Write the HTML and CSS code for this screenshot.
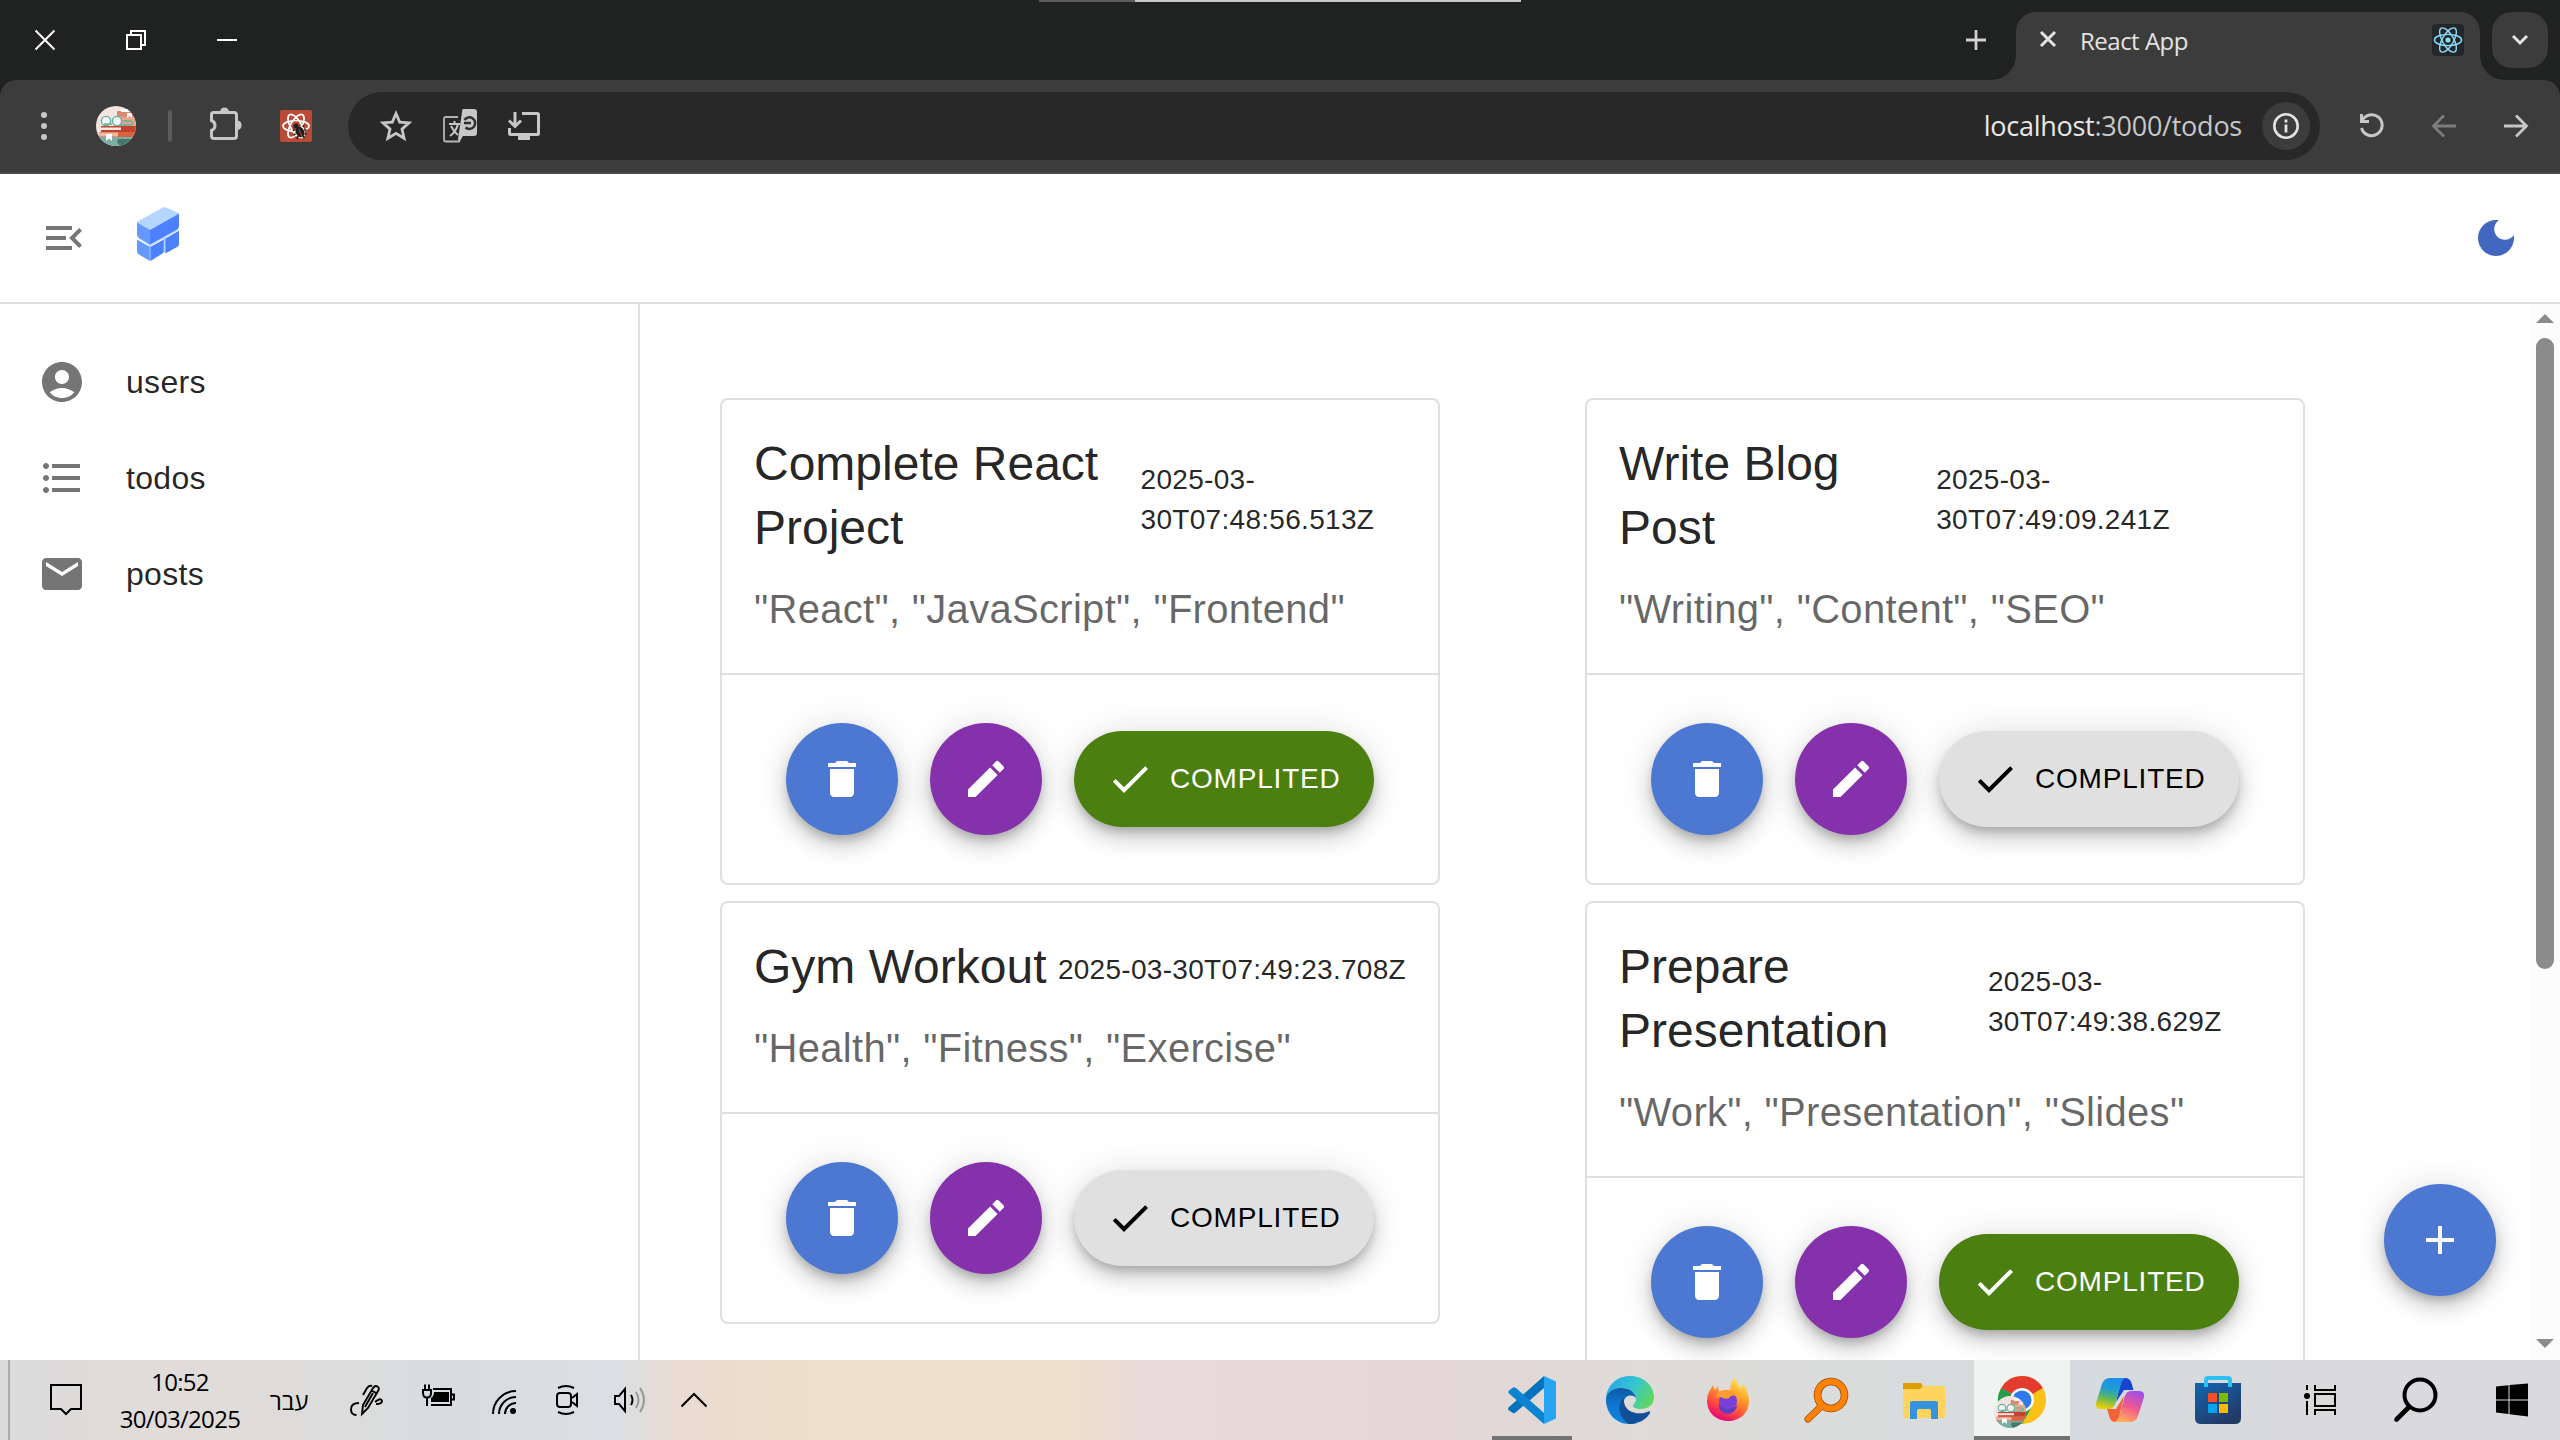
FILE: index.html
```html
<!DOCTYPE html>
<html lang="en">
<head>
<meta charset="utf-8">
<title>React App</title>
<link rel="stylesheet" href="styles.css">
</head>
<body>
<svg class="sprite" width="0" height="0" aria-hidden="true">
  <defs>
    <clipPath id="round"><circle cx="20" cy="20" r="20"/></clipPath>
    <symbol id="avatar" viewBox="0 0 40 40">
      <g clip-path="url(#round)">
        <rect width="40" height="40" fill="#f3e4df"/>
        <rect x="21" y="5" width="19" height="6" fill="#d98a72"/>
        <rect x="25" y="3" width="12" height="3" fill="#fff"/>
        <rect x="22" y="11" width="18" height="9" fill="#e3a58e"/>
        <path d="M31 7h5v5l-2.500-2-2.500 2z" fill="#fff"/>
        <rect x="5" y="20" width="35" height="6" fill="#c5412f"/>
        <rect x="5" y="21.500" width="20" height="2.500" fill="#f6e9e4"/>
        <rect x="3" y="26" width="37" height="6" fill="#d9623f"/>
        <rect x="3" y="26.500" width="19" height="4" fill="#efb79f"/>
        <rect x="0" y="31" width="40" height="9" fill="#78b0a3"/>
        <path d="M22 33h18v7H24q-4-4-2-7z" fill="#47776b"/>
        <path d="M10 28h6v7l-3-2.500-3 2.500z" fill="#fff"/>
        <g fill="#f2f6f4" stroke="#63b09f" stroke-width="1.400"><circle cx="10" cy="15" r="4.600"/><circle cx="21" cy="15" r="4.600"/><path d="M8 18h8M27 15h8q3 2 0 4H24" fill="none"/></g>
      </g>
    </symbol>
    <symbol id="atom" viewBox="-20 -20 40 40">
      <g fill="none" stroke="currentColor"><ellipse rx="17" ry="7"/><ellipse rx="17" ry="7" transform="rotate(60)"/><ellipse rx="17" ry="7" transform="rotate(120)"/></g>
      <circle r="3.200" fill="currentColor" stroke="none"/>
    </symbol>
    <symbol id="trash" viewBox="0 0 24 24"><path d="M6 19c0 1.100.9 2 2 2h8c1.100 0 2-.9 2-2V7H6v12zM19 4h-3.500l-1-1h-5l-1 1H5v2h14V4z"/></symbol>
    <symbol id="pencil" viewBox="0 0 24 24"><path d="M3 17.250V21h3.750L17.810 9.940l-3.750-3.750L3 17.250zM20.710 7.040c.39-.39.39-1.020 0-1.410l-2.340-2.340a.9959.9959 0 0 0-1.410 0l-1.830 1.830 3.750 3.750 1.830-1.830z"/></symbol>
    <symbol id="check" viewBox="0 0 24 24"><path d="M9 16.170 4.830 12l-1.420 1.410L9 19 21 7l-1.410-1.410z"/></symbol>
  </defs>
</svg>

<div class="screen">
  <header class="tabstrip">
    <div class="load-line"><span class="load-dim"></span><span class="load-lit"></span></div>
    <div class="window-controls">
      <svg width="24" height="24" viewBox="0 0 24 24"><path d="M2.500 2.500l19 19M21.500 2.500l-19 19" stroke="#fff" stroke-width="2" fill="none"/></svg>
      <svg width="24" height="24" viewBox="0 0 24 24"><path d="M3 7h14v14H3zM7 7V3h14v14h-4" stroke="#fff" stroke-width="2" fill="none"/></svg>
      <svg width="24" height="24" viewBox="0 0 24 24"><path d="M2 12h20" stroke="#fff" stroke-width="2"/></svg>
    </div>
    <svg class="new-tab" width="20" height="20" viewBox="0 0 20 20"><path d="M10 0v20M0 10h20" stroke="#d0d0d0" stroke-width="2.800"/></svg>
    <div class="tab">
      <svg class="tab-close" width="16" height="16" viewBox="0 0 16 16"><path d="M1 1l14 14M15 1L1 15" stroke="#e3e3e3" stroke-width="3"/></svg>
      <span class="tab-title">React App</span>
      <span class="favicon"><svg width="32" height="32"><use href="#atom"/></svg></span>
    </div>
    <div class="tab-search"><svg width="16" height="10" viewBox="0 0 16 10"><path d="M1 1l7 7 7-7" stroke="#e3e3e3" stroke-width="3" fill="none"/></svg></div>
  </header>

  <div class="toolbar">
    <svg class="ic-dots" width="40" height="40" viewBox="0 0 40 40" fill="#c7c7c7"><circle cx="20" cy="9" r="3"/><circle cx="20" cy="20" r="3"/><circle cx="20" cy="31" r="3"/></svg>
    <svg class="ic-avatar" width="40" height="40"><use href="#avatar"/></svg>
    <span class="divider"></span>
    <svg class="ic-puzzle" width="40" height="40" viewBox="0 -1 40 40"><path d="M7.500 5.500h20.500q2.500 0 2.500 2.500v21q0 2.500-2.500 2.500H8q-2.500 0-2.500-2.500v-5.500a6 5.500 0 0 0 0-10V7.500q0-2 2-2z" fill="none" stroke="#c7c7c7" stroke-width="3"/><path d="M14 5a4.500 4.500 0 0 1 9 0zM31.500 13.500a4.800 4.800 0 0 1 0 9.500z" fill="#c7c7c7"/></svg>
    <svg class="ic-react" width="40" height="40" viewBox="0 0 40 40"><rect x="4" y="4" width="32" height="32" rx="2" fill="#b94b36"/><g fill="none" stroke="#fff" stroke-width="1.700"><ellipse cx="20" cy="20" rx="13" ry="5.500"/><ellipse cx="20" cy="20" rx="13" ry="5.500" transform="rotate(60 20 20)"/><ellipse cx="20" cy="20" rx="13" ry="5.500" transform="rotate(120 20 20)"/></g><g fill="#202020"><circle cx="20" cy="20" r="2.600"/><ellipse cx="24" cy="26" rx="4.200" ry="5.500" transform="rotate(-25 24 26)"/><path d="M18.500 25l-1.500-1.500M19.500 28l-2 1M22 30l-1 3M27 21l1-2M28 24h2.500M28.500 27.500l2 .5M27 30l1.500 2" stroke="#202020" stroke-width="1.600"/></g><path d="M23 23l3 8" stroke="#b94b36"/></svg>
    <div class="omnibox">
      <svg width="40" height="40" viewBox="0 0 40 40"><path d="M20 7.500l3.700 8.600 9.300.8-7 6.200 2.100 9.200L20 27.400l-8.100 4.900L14 23.100l-7-6.200 9.300-.8z" fill="none" stroke="#c7c7c7" stroke-width="2.800"/></svg>
      <svg width="40" height="40" viewBox="0 0 40 40"><path d="M18 11H6q-2 0-2 2v20.500q0 2 2 2h13L22 29" fill="none" stroke="#b4b4b4" stroke-width="1.800"/><path d="M22.500 3H34q3 0 3 3v21q0 3-3 3H23l-4 5 -1-2z" fill="#c7c7c7"/><path d="M9 18h11M14.500 15v3M18 18q-2 8-8 12M11 20q3 6 7 9" stroke="#c7c7c7" stroke-width="2" fill="none"/><path d="M24 17h7M24.500 14a5.800 5.800 0 1 1 1 7.500" stroke="#303030" stroke-width="2.500" fill="none"/></svg>
      <svg width="40" height="40" viewBox="0 0 40 40"><path d="M18 7.500h15.500q1 0 1 1v19q0 1-1 1h-27q-1 0-1-1V22M11 6v14M5 14.500l6 6 6-6" fill="none" stroke="#c7c7c7" stroke-width="3"/><rect x="14" y="28" width="12" height="6" fill="#c7c7c7"/></svg>
      <span class="url"><b>localhost</b>:3000/todos</span>
      <span class="site-info"><svg width="28" height="28" viewBox="0 0 28 28"><circle cx="14" cy="14" r="11.700" fill="none" stroke="#e3e3e3" stroke-width="2.600"/><path d="M14 12.500v8M14 7.500v3" stroke="#e3e3e3" stroke-width="2.800"/></svg></span>
    </div>
    <div class="nav">
      <svg width="40" height="40" viewBox="0 0 40 40"><path d="M9.500 8v7.500H17M10 15A10.500 10.500 0 1 1 9.500 22" fill="none" stroke="#c7c7c7" stroke-width="3"/></svg>
      <svg width="40" height="40" viewBox="0 0 40 40"><path d="M32 20H10M20 9.500L9.500 20 20 30.500" fill="none" stroke="#7c7c7c" stroke-width="2.800"/></svg>
      <svg width="40" height="40" viewBox="0 0 40 40"><path d="M8 20h22M20 9.500L30.500 20 20 30.500" fill="none" stroke="#c7c7c7" stroke-width="2.800"/></svg>
    </div>
  </div>

  <div class="appbar">
    <svg class="menu-open" width="48" height="48" viewBox="0 0 24 24" fill="#757575"><path d="M3 18h13v-2H3v2zm0-5h10v-2H3v2zm0-7v2h13V6H3zm18 9.590L17.420 12 21 8.410 19.590 7l-5 5 5 5L21 15.590z"/></svg>
    <svg class="logo" width="44" height="56" viewBox="136 206 44 56"><path d="M138 238l12 8 28-15.500-1-2.500-27 14-12-7z" fill="#b5d7ff"/><path d="M149.500 244h1.500v16.500h-1.500zM163 238h2.500v14.500h-2.500z" fill="#b5d7ff"/><path d="M138.500 221l24-13.300q2-1.200 4 0l11.500 5q2 1 0 2.300l-28 15.500-12-7q-2.500-1.200.5-2.500z" fill="#b5d7ff"/><path d="M137 222.500l13 7.500v14.400l-11-6.500q-2-1.200-2-3.200z" fill="#69f"/><path d="M150 230l29-16.300v12.800q0 2-2 3.100L150 244.600z" fill="#4d80ff"/><path d="M137 239.500l12.800 7.300V261l-10.800-6.500q-2-1.200-2-3.200z" fill="#69f"/><path d="M150.500 246.800l13.200-7.400v12q0 1.500-2 2.600L150.500 261z" fill="#4d80ff"/><path d="M165.300 238.500l13.700-7.700v13.700q0 1.500-2 2.600l-11.700 6.500z" fill="#4d80ff"/></svg>
    <svg class="theme" width="48" height="48" viewBox="0 0 24 24" fill="#4267be"><path d="M12 3c-4.970 0-9 4.030-9 9s4.030 9 9 9 9-4.030 9-9c0-.46-.04-.92-.1-1.360-.98 1.370-2.580 2.260-4.400 2.260-2.980 0-5.400-2.420-5.400-5.400 0-1.810.89-3.420 2.260-4.400-.44-.06-.9-.1-1.360-.1z"/></svg>
  </div>

  <div class="body">
    <nav class="sidebar">
      <a class="side-item"><svg viewBox="0 0 24 24"><path d="M12 2C6.480 2 2 6.480 2 12s4.480 10 10 10 10-4.480 10-10S17.520 2 12 2zm0 4c1.930 0 3.500 1.570 3.500 3.500S13.930 13 12 13s-3.500-1.570-3.500-3.500S10.070 6 12 6zm0 14c-2.030 0-4.430-.82-6.140-2.880C7.550 15.800 9.680 15 12 15s4.450.8 6.140 2.120C16.430 19.180 14.030 20 12 20z"/></svg>users</a>
      <a class="side-item"><svg viewBox="0 0 24 24"><path d="M4 10.500c-.83 0-1.500.67-1.500 1.500s.67 1.500 1.500 1.500 1.500-.67 1.500-1.500-.67-1.500-1.500-1.500zm0-6c-.83 0-1.500.67-1.500 1.500S3.170 7.500 4 7.500 5.500 6.830 5.500 6 4.830 4.500 4 4.500zm0 12c-.83 0-1.500.68-1.500 1.500s.68 1.500 1.500 1.500 1.500-.68 1.500-1.500-.67-1.500-1.500-1.500zM7 19h14v-2H7v2zm0-6h14v-2H7v2zm0-8v2h14V5H7z"/></svg>todos</a>
      <a class="side-item"><svg viewBox="0 0 24 24"><path d="M20 4H4c-1.100 0-1.990.9-1.990 2L2 18c0 1.100.9 2 2 2h16c1.100 0 2-.9 2-2V6c0-1.100-.9-2-2-2zm0 4-8 5-8-5V6l8 5 8-5v2z"/></svg>posts</a>
    </nav>

    <main class="content">
      <div class="grid">
        <div class="column">
          <article class="card">
            <div class="card-text">
              <div class="card-head"><h2>Complete React Project</h2><p>2025-03-30T07:48:56.513Z</p></div>
              <p class="tags">"React", "JavaScript", "Frontend"</p>
            </div>
            <div class="actions">
              <button class="fab blue"><svg><use href="#trash"/></svg></button>
              <button class="fab purple"><svg><use href="#pencil"/></svg></button>
              <button class="fab wide done"><svg><use href="#check"/></svg>COMPLITED</button>
            </div>
          </article>
          <article class="card">
            <div class="card-text">
              <div class="card-head"><h2>Gym Workout</h2><p>2025-03-30T07:49:23.708Z</p></div>
              <p class="tags">"Health", "Fitness", "Exercise"</p>
            </div>
            <div class="actions">
              <button class="fab blue"><svg><use href="#trash"/></svg></button>
              <button class="fab purple"><svg><use href="#pencil"/></svg></button>
              <button class="fab wide"><svg><use href="#check"/></svg>COMPLITED</button>
            </div>
          </article>
        </div>
        <div class="column">
          <article class="card">
            <div class="card-text">
              <div class="card-head"><h2>Write Blog Post</h2><p>2025-03-30T07:49:09.241Z</p></div>
              <p class="tags">"Writing", "Content", "SEO"</p>
            </div>
            <div class="actions">
              <button class="fab blue"><svg><use href="#trash"/></svg></button>
              <button class="fab purple"><svg><use href="#pencil"/></svg></button>
              <button class="fab wide"><svg><use href="#check"/></svg>COMPLITED</button>
            </div>
          </article>
          <article class="card">
            <div class="card-text">
              <div class="card-head"><h2>Prepare Presentation</h2><p>2025-03-30T07:49:38.629Z</p></div>
              <p class="tags">"Work", "Presentation", "Slides"</p>
            </div>
            <div class="actions">
              <button class="fab blue"><svg><use href="#trash"/></svg></button>
              <button class="fab purple"><svg><use href="#pencil"/></svg></button>
              <button class="fab wide done"><svg><use href="#check"/></svg>COMPLITED</button>
            </div>
          </article>
        </div>
      </div>
      <button class="fab blue add"><svg viewBox="0 0 24 24"><path d="M19 13h-6v6h-2v-6H5v-2h6V5h2v6h6v2z"/></svg></button>
    </main>

    <div class="scrollbar"><span class="arrow up"></span><span class="thumb"></span><span class="arrow down"></span></div>
  </div>

  <footer class="taskbar">
    <span class="peek"></span>
    <svg class="t-note" width="48" height="48" viewBox="0 0 48 48"><path d="M9 9h30v24H29l-5 5-5-5H9z" fill="none" stroke="#000" stroke-width="2"/></svg>
    <div class="clock"><span>10:52</span><span>30/03/2025</span></div>
    <span class="lang" lang="he">עבר</span>
    <div class="tray">
      <svg class="t-pen" width="48" height="48" viewBox="0 0 48 48"><path d="M20 38l1-9 10-17q2-3 4.500-1.500T36 15L26 32l-6 6zM29 14l5 3M30 10q-3-1-5 2l-4 7M31 17l-8 14M17 27q-8 0-8 6.500 0 5.500 5.500 5.500M33 26q6-5 7-1 0 3-6 3" fill="none" stroke="#000" stroke-width="1.900"/></svg>
      <svg class="t-bat" width="48" height="48" viewBox="0 -2 48 48"><path d="M19 11h18v16H17M38 16.500h2v5h-2" fill="none" stroke="#000" stroke-width="2"/><path d="M20 14h15v10H17v-4q3-2 3-6zM12 20h2v8h-2z"/><path d="M9 12h8v3q0 4.500-4 4.500t-4-4.500zM11 12V6.500M15 12V6.500" fill="none" stroke="#000" stroke-width="2"/></svg>
      <svg class="t-wifi" width="48" height="48" viewBox="0 0 48 48"><path d="M13 38A23 23 0 0 1 36 15M19 38A17 17 0 0 1 36 21M25 38A11 11 0 0 1 36 27" fill="none" stroke="#000" stroke-width="2"/><circle cx="33" cy="35" r="3"/></svg>
      <svg class="t-meet" width="48" height="48" viewBox="0 0 48 48"><rect x="14" y="17" width="14" height="14" rx="3" fill="none" stroke="#000" stroke-width="2"/><path d="M29 22l5-4v12l-5-4M15 12q8-4 16 0M15 36q8 4 16 0" fill="none" stroke="#000" stroke-width="2"/></svg>
      <svg class="t-vol" width="48" height="48" viewBox="0 0 48 48"><path d="M9 20h4l6-7v22l-6-7H9z" fill="none" stroke="#000" stroke-width="2"/><path d="M25 19q3 5 0 10" fill="none" stroke="#000" stroke-width="2"/><path d="M30 16q5 8 0 16M34 12q8 12 0 24" fill="none" stroke="#999" stroke-width="2"/></svg>
      <svg class="t-more" width="48" height="48" viewBox="0 0 48 48"><path d="M11.500 30.500L24 18l12.500 12.500" fill="none" stroke="#000" stroke-width="2"/></svg>
    </div>

    <div class="apps">
      <span class="app running"><svg viewBox="0 0 48 48"><path d="M36 0L1 31q-2 2 0 3.500l4 2.500q1 .8 3-1L36 12z" fill="#0472bd"/><path d="M1 14.500l4-3q1-.8 3 .5L36 37v11L1 17.500q-1.500-1.500 0-3z" fill="#0b85d2"/><path d="M36 0l12 5.500v37L36 48z" fill="#27a5f0"/></svg></span>
      <span class="app"><svg viewBox="0 0 48 48"><defs><linearGradient id="e1" x1="0" y1=".3" x2="1" y2=".7"><stop offset="0" stop-color="#2ba8ea"/><stop offset=".5" stop-color="#35c5d0"/><stop offset="1" stop-color="#62d957"/></linearGradient><linearGradient id="e2" x1="0" y1="0" x2="0" y2="1"><stop offset="0" stop-color="#0c59a4"/><stop offset=".5" stop-color="#0f78d4"/><stop offset="1" stop-color="#0b85dc"/></linearGradient></defs><path d="M0 22C1 9 11 0 24 0c14 0 24 10 24 21 0 8-6 12-13 12-5 0-8-2-8-3 0-2 3-3 3-7 0-5-5-11-14-11C8 12 2 16 0 22z" fill="url(#e1)"/><path d="M0 24c0-7 6-12 15-12 8 0 14 4 15 10-4-4-10-3-12 2-3 9 3 20 13 23-3 1-6 1-8 1C10 48 0 37 0 24z" fill="url(#e2)"/><path d="M19 21c-8 5-8 19 4 27 9 0 17-4 21-11 .5-1-.4-2-1.500-1.500C32 40 19 36 18 26c0-2 0-3 1-5z" fill="#124f97"/></svg></span>
      <span class="app"><svg viewBox="0 0 48 48"><defs><linearGradient id="f1" x1=".8" y1="0" x2=".3" y2="1"><stop offset="0" stop-color="#fff04a"/><stop offset=".4" stop-color="#ff9a2a"/><stop offset=".7" stop-color="#ff4a3f"/><stop offset="1" stop-color="#e3007b"/></linearGradient></defs><path d="M30 2c4 4 5 8 6 11l3-5c4 6 6 11 6 17 0 12-9 20-21 20S3 36 3 25c0-6 2-10 5-14l1-2 2 5 3-4 1 6c4-2 8-1 11 0 0-5 1-10 4-14z" fill="url(#f1)"/><circle cx="24" cy="25" r="9" fill="#7a3fd6"/><path d="M15 16c4-3 10-3 14 0l4 3-6 1c-3 4-7 3-10 1l-6 1z" fill="#ff9c2f"/><path d="M15 27c2 6 12 9 18 2-1 8-8 10-13 8-4-2-6-6-5-10z" fill="#5b3fc0"/></svg></span>
      <span class="app"><svg viewBox="0 0 48 48"><circle cx="29" cy="19" r="13.500" fill="none" stroke="#9a5214" stroke-width="7.600"/><path d="M19.500 30L6 43" stroke="#9a5214" stroke-width="7" stroke-linecap="round"/><circle cx="29" cy="19" r="13.500" fill="none" stroke="#ff8205" stroke-width="6"/><path d="M19.500 30L6 43" stroke="#ff8205" stroke-width="5.400" stroke-linecap="round"/></svg></span>
      <span class="app"><svg viewBox="0 0 48 48"><path d="M3 7h18q3 3 0 6H3z" fill="#de9c07"/><path d="M3 13h17l3-3h20q2 0 2 2v28q0 2-2 2H5q-2 0-2-2z" fill="#ffd45c"/><path d="M10 43V27q0-2 2-2h24q2 0 2 2v16h-7v-8q0-2-2-2H19q-2 0-2 2v8z" fill="#3893df"/></svg></span>
      <span class="app running active"><svg viewBox="0 0 48 48"><circle cx="24" cy="24" r="24" fill="#fbc116"/><path d="M24 24L3.200 12A24 24 0 0 1 44.800 12z" fill="#e33b2e"/><path d="M3.200 12A24 24 0 0 0 24 48l10.400-18L24 24z" fill="#229b4a"/><circle cx="24" cy="24" r="12" fill="#fff"/><circle cx="24" cy="24" r="9.500" fill="#2c79ee"/><use href="#avatar" x="-4" y="20" width="32" height="32"/></svg></span>
      <span class="app"><svg viewBox="0 0 48 48"><defs><linearGradient id="c1" x1=".5" y1="0" x2=".3" y2="1"><stop offset="0" stop-color="#1b8eea"/><stop offset=".35" stop-color="#1f9fd0"/><stop offset=".65" stop-color="#62b95c"/><stop offset="1" stop-color="#f5d000"/></linearGradient><linearGradient id="c2" x1=".7" y1="0" x2=".3" y2="1"><stop offset="0" stop-color="#a14fe8"/><stop offset=".5" stop-color="#f0588f"/><stop offset="1" stop-color="#ffb25a"/></linearGradient></defs><path d="M26 2h3q5 0 6.500 5l2 7H28l-8 12z" fill="#1745cf"/><path d="M22 46h-3q-4 0-5.500-5L11 33h9l8-13z" fill="#f4623a"/><path d="M14 2h16q-4 1-5.500 7l-5 18q-2 6-6 6H5q-6 0-5-6L6 8q2-6 8-6z" fill="url(#c1)"/><path d="M34 46H18q4-1 5.500-7l5-18q2-6 6-6H43q6 0 5 6l-6 19q-2 6-8 6z" fill="url(#c2)"/></svg></span>
      <span class="app"><svg viewBox="0 0 48 48"><defs><linearGradient id="s1" x1="0" y1="0" x2=".6" y2="1"><stop offset="0" stop-color="#1166b2"/><stop offset="1" stop-color="#233a66"/></linearGradient></defs><path d="M1 7h46v35q0 6-6 6H7q-6 0-6-6z" fill="url(#s1)"/><path d="M12 11V4q0-2 2-2h20q2 0 2 2v7" fill="none" stroke="#2fc0f3" stroke-width="4"/><path d="M14 17h9v9h-9z" fill="#f25022"/><path d="M25 17h9v9h-9z" fill="#7fba00"/><path d="M14 28h9v9h-9z" fill="#00a4ef"/><path d="M25 28h9v9h-9z" fill="#ffb900"/></svg></span>
    </div>
    <div class="system">
      <span class="app"><svg viewBox="0 0 48 48"><path d="M11 9v5M11 25v14M19 9v5h20V9M19 39v-5h20v5M19 18h20v12H19z" fill="none" stroke="#000" stroke-width="2"/><circle cx="11" cy="20" r="3"/></svg></span>
      <span class="app"><svg viewBox="0 0 48 48"><circle cx="28" cy="19" r="15.500" fill="none" stroke="#000" stroke-width="4"/><path d="M17 31L4.500 43.500" stroke="#000" stroke-width="4.600" stroke-linecap="round"/></svg></span>
      <span class="app"><svg viewBox="0 0 48 48"><path d="M8 10.500L20.500 9.200v14.300H8zM21.500 9L40 7.500v16H21.500zM8 24.500h12.500V38L8 36.500zM21.500 24.500H40V40.500l-18.500-2.300z"/></svg></span>
    </div>
  </footer>
</div>
</body>
</html>
```
FILE: styles.css
```css
* { box-sizing: border-box; margin: 0; padding: 0; }
body { background: #fff; font-family: "Liberation Sans", Arial, sans-serif; }
svg { display: block; flex: none; overflow: visible; }
.sprite { position: absolute; }

.screen { width: 2560px; height: 1440px; display: flex; flex-direction: column; overflow: hidden; background: #fff; }

/* Browser tab strip */
.tabstrip { position: relative; height: 80px; flex: none; display: flex; background: #202221; padding-right: 12px; }
.load-line { position: absolute; top: 0; left: 1039px; display: flex; }
.load-dim { width: 96px; height: 2px; background: #5c5c5c; }
.load-lit { width: 386px; height: 2px; background: #c9c9c9; }
.window-controls { display: flex; gap: 67px; padding: 28px 0 0 33px; }
.new-tab { margin: 30px 30px 0 auto; }
.tab { position: relative; width: 464px; height: 68px; margin-top: 12px; padding: 0 16px 14px 24px; display: flex; align-items: center; background: #3c3c3c; border-radius: 20px 20px 0 0; }
.tab::before, .tab::after { content: ""; position: absolute; bottom: 0; width: 24px; height: 24px; }
.tab::before { left: -24px; background: radial-gradient(circle at 0 0, transparent 23.500px, #3c3c3c 24px); }
.tab::after { right: -24px; background: radial-gradient(circle at 100% 0, transparent 23.500px, #3c3c3c 24px); }
.tab-title { margin: 3px 0 0 24px; color: #e3e3e3; font: 24px/32px "Open Sans", "Noto Sans", sans-serif; letter-spacing: -0.500px; }
.favicon { width: 32px; height: 32px; margin: 2px 0 0 auto; background: #23272a; border-radius: 4px; color: #8bdcfb; stroke-width: 1.800px; }
.tab-search { width: 56px; height: 56px; margin: 12px 0 0 12px; display: flex; align-items: center; justify-content: center; background: #3c3c3c; border-radius: 20px; }

/* Browser toolbar */
.toolbar { height: 94px; flex: none; display: flex; align-items: center; padding: 0 24px; background: radial-gradient(circle at 16px 16px, #3c3c3c 15.500px, #202221 16px) 0 0 / 16px 16px no-repeat, radial-gradient(circle at 0 16px, #3c3c3c 15.500px, #202221 16px) 100% 0 / 16px 16px no-repeat, #3c3c3c; border-bottom: 2px solid #4a4849; }
.ic-avatar { margin-left: 32px; }
.divider { width: 4px; height: 32px; margin: 0 34px 0 32px; background: #5c5c5c; border-radius: 2px; }
.ic-react { margin-left: 30px; }
.omnibox { width: 1972px; height: 68px; margin-left: 32px; padding: 0 10px 0 28px; display: flex; align-items: center; gap: 24px; background: #282828; border-radius: 34px; }
.url { margin-left: auto; color: #c7c7c7; font: 27px/40px "Open Sans", "Noto Sans", sans-serif; letter-spacing: -0.250px; }
.url b { font-weight: 400; color: #e8e8e8; }
.site-info { width: 48px; height: 48px; margin-left: -4px; display: flex; align-items: center; justify-content: center; border-radius: 50%; background: #3c3c3c; }
.nav { margin-left: 32px; display: flex; gap: 32px; }

/* Application header */
.appbar { height: 130px; flex: none; display: flex; align-items: center; padding: 0 40px; border-bottom: 2px solid #e0e0e0; }
.logo { margin: -8px 0 0 48px; }
.theme { margin-left: auto; }

.body { flex: 1; min-height: 0; display: flex; }
.sidebar { width: 640px; flex: none; padding-top: 30px; border-right: 2px solid #e0e0e0; }
.side-item { height: 96px; padding-left: 38px; display: flex; align-items: center; gap: 40px; color: rgba(0, 0, 0, .87); font-size: 32px; line-height: 48px; letter-spacing: .3px; }
.side-item svg { width: 48px; height: 48px; fill: #757575; }

.content { position: relative; flex: 1; overflow: hidden; }
.grid { display: flex; gap: 145px; padding: 94px 80px 0; }
.column { width: 720px; flex: none; display: flex; flex-direction: column; gap: 16px; }
.card { border: 2px solid #e0e0e0; border-radius: 8px; }
.card-text { padding: 32px; border-bottom: 2px solid #e0e0e0; color: rgba(0, 0, 0, .87); }
.card-head { display: flex; align-items: center; justify-content: space-between; margin-bottom: 16.800px; }
.card-head h2 { font-size: 48px; font-weight: 400; line-height: 64px; }
.card-head p { padding-top: 7px; font-size: 28px; line-height: 40px; letter-spacing: .3px; }
.tags { font-size: 40px; line-height: 64px; letter-spacing: .3px; color: rgba(0, 0, 0, .6); white-space: nowrap; }
.actions { display: flex; align-items: center; justify-content: center; gap: 32px; padding: 48px 0; }

.fab { width: 112px; height: 112px; display: flex; align-items: center; justify-content: center; border: 0; border-radius: 56px; color: #fff; box-shadow: 0 6px 10px -2px rgba(0, 0, 0, .2), 0 12px 20px rgba(0, 0, 0, .14), 0 2px 36px rgba(0, 0, 0, .12); }
.fab svg { width: 48px; height: 48px; fill: currentColor; }
.blue { background: #4c78d2; }
.purple { background: #8431ab; }
.wide { width: 300px; height: 96px; padding: 0 32px; justify-content: flex-start; gap: 16px; background: #e0e0e0; color: #000; font: 28px/49px "Liberation Sans", Arial, sans-serif; letter-spacing: .8px; }
.done { background: #4b7f10; color: #fff; }
.add { position: absolute; right: 34px; bottom: 64px; }

.scrollbar { width: 30px; flex: none; display: flex; flex-direction: column; align-items: center; padding: 10px 0 12px; background: #fcfcfc; }
.arrow { border: 9px solid transparent; border-top-width: 0; border-bottom: 9px solid #8b8b8b; }
.thumb { width: 18px; height: 631px; margin-top: 15px; border-radius: 9px; background: #8b8b8b; }
.down { margin-top: auto; transform: rotate(180deg); }

/* Desktop taskbar */
.taskbar { height: 80px; flex: none; display: flex; align-items: center; background: linear-gradient(90deg, #dbdbdb 0, #e1dcd9 190px, #d9dcde 430px, #dbdfe3 620px, #e9dbd5 670px, #ebdccc 730px, #eee0cb 850px, #eedfcd 1060px, #e7dad9 1160px, #e4d7d4 1440px, #dedbd9 1640px, #dadcdc 1850px, #d5dbde 2080px, #dad9dc 2330px, #d9d8dd 2560px); }
.peek { width: 2px; height: 80px; margin-left: 8px; background: #aaa; }
.t-note { margin-left: 32px; }
.clock { width: 140px; margin: 0 0 0 20px; display: flex; flex-direction: column; align-items: center; font: 24px/37px "Open Sans", "Noto Sans", sans-serif; letter-spacing: -0.700px; color: #000; white-space: nowrap; }
.lang { width: 44px; margin: 2px 0 0 17px; font: 24px/32px "Open Sans", "Noto Sans", "DejaVu Sans", sans-serif; text-align: center; white-space: nowrap; }
.tray { display: flex; margin-left: 31px; }
.t-bat { margin-left: 24px; }
.t-wifi { margin-left: 18px; }
.t-meet, .t-vol { margin-left: 15px; }
.t-more { margin-left: 16px; }
.apps { display: flex; gap: 2px; margin-left: auto; }
.system { display: flex; margin-left: 6px; }
.app { width: 96px; height: 80px; display: flex; align-items: center; justify-content: center; }
.app svg { width: 48px; height: 48px; }
.running { background: linear-gradient(#727272, #727272) center bottom / 80px 4px no-repeat; }
.active { background: linear-gradient(#727272, #727272) center bottom / 96px 4px no-repeat, #f1f2f2; }
```
